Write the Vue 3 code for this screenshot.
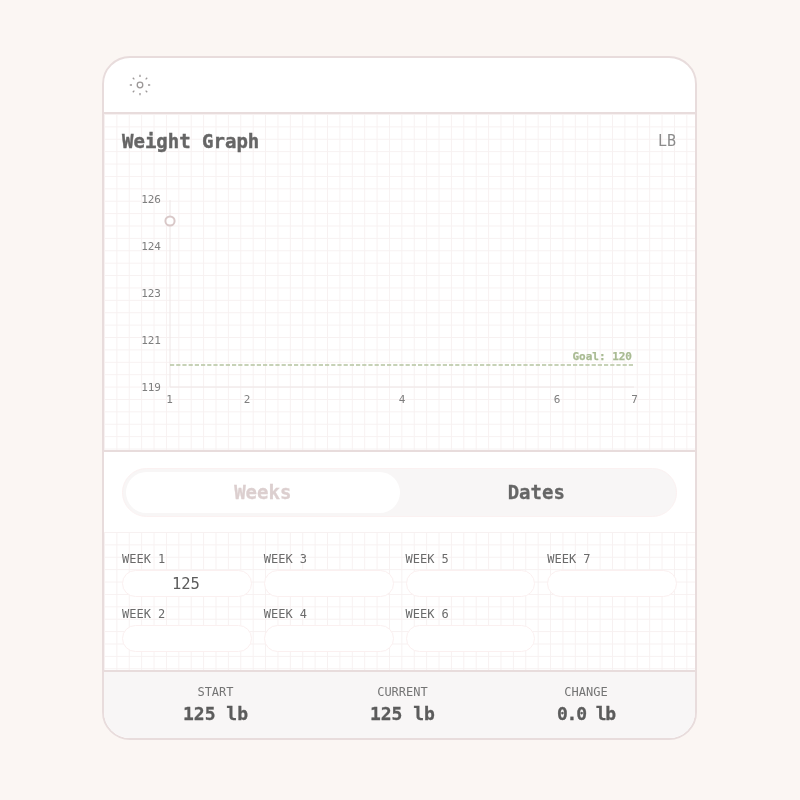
<script setup>
const weeks = [
  { label: 'WEEK 1', value: '125' }, { label: 'WEEK 2', value: '' },
  { label: 'WEEK 3', value: '' }, { label: 'WEEK 4', value: '' },
  { label: 'WEEK 5', value: '' }, { label: 'WEEK 6', value: '' },
  { label: 'WEEK 7', value: '' },
]
const yTicks = [
  { t: '126', y: 12 }, { t: '124', y: 59 }, { t: '123', y: 106 }, { t: '121', y: 153 }, { t: '119', y: 200 },
]
const xTicks = [
  { t: '1', x: 65.5 }, { t: '2', x: 143 }, { t: '4', x: 298 }, { t: '6', x: 453 }, { t: '7', x: 530.5 },
]
const rays = [0, 45, 90, 135, 180, 225, 270, 315]
const stats = [
  { label: 'START', value: '125 lb' },
  { label: 'CURRENT', value: '125 lb' },
  { label: 'CHANGE', value: '0.0 lb', tight: true },
]
</script>

<template>
  <div class="page">
    <div class="card">
      <header class="top">
        <svg class="sun" width="24" height="24" viewBox="0 0 24 24">
          <circle cx="12" cy="12" r="2.8" />
          <line v-for="r in rays" :key="r" x1="12" y1="1.8" x2="12" y2="4" :transform="`rotate(${r} 12 12)`" />
        </svg>
      </header>
      <section class="graph grid-bg">
        <div class="graph-head">
          <h2>Weight Graph</h2>
          <span class="unit">LB</span>
        </div>
        <svg class="chart" width="590" height="225" viewBox="0 0 590 225">
          <line class="axis" x1="66" y1="13" x2="66" y2="200" />
          <line class="axis" x1="66" y1="200" x2="530" y2="200" />
          <line class="goal" x1="66" y1="178" x2="529" y2="178" />
          <text class="goal-text" x="528" y="173" text-anchor="end">Goal: 120</text>
          <text v-for="y in yTicks" :key="y.t" class="tick" x="57" :y="y.y + 4" text-anchor="end">{{ y.t }}</text>
          <text v-for="x in xTicks" :key="x.t" class="tick" :x="x.x" y="216" text-anchor="middle">{{ x.t }}</text>
          <circle class="point" cx="66" cy="34" r="4.6" />
        </svg>
      </section>
      <section class="toggle-wrap">
        <div class="toggle">
          <div class="tab active">Weeks</div>
          <div class="tab">Dates</div>
        </div>
      </section>
      <section class="weeks grid-bg">
        <div v-for="w in weeks" :key="w.label" class="week">
          <span class="week-label">{{ w.label }}</span>
          <div class="week-input">{{ w.value }}</div>
        </div>
      </section>
      <footer class="stats">
        <div v-for="s in stats" :key="s.label" class="stat">
          <span class="stat-label">{{ s.label }}</span>
          <strong class="stat-value" :class="{ tight: s.tight }">{{ s.value }}</strong>
        </div>
      </footer>
    </div>
  </div>
</template>

<style>
html, body { margin: 0; background: #fbf6f3; }
</style>

<style scoped>
.page {
  width: 800px;
  height: 800px;
  display: flex;
  align-items: flex-start;
  justify-content: center;
  padding: 56px 1px 0 0;
  box-sizing: border-box;
  font-family: "DejaVu Sans Mono", "Liberation Mono", monospace;
  color: #5c5c5c;
  will-change: transform;
}
.card {
  width: 595px;
  height: 684px;
  box-sizing: border-box;
  background: #fff;
  border: 2px solid #e8dcdc;
  border-radius: 28px;
  overflow: hidden;
  display: flex;
  flex-direction: column;
}
.top {
  height: 56px;
  flex: none;
  box-sizing: border-box;
  border-bottom: 2px solid #e8dcdc;
  display: flex;
  align-items: center;
  padding-left: 24px;
}
.sun { stroke: #9c9898; fill: none; stroke-width: 1.3; }
.grid-bg {
  background-color: #fff;
  background-image:
    linear-gradient(#f7f1f1 1px, transparent 1px),
    linear-gradient(90deg, #f7f1f1 1px, transparent 1px);
  background-size: 12.4px 12.4px;
}
.graph {
  height: 338px;
  flex: none;
  box-sizing: border-box;
  border-bottom: 2px solid #e8dcdc;
  padding-top: 15px;
  display: flex;
  flex-direction: column;
}
.graph-head {
  display: flex;
  justify-content: space-between;
  align-items: center;
  padding: 0 19px 0 18px;
  height: 24px;
}
.graph-head h2 {
  margin: 0;
  font-size: 19px;
  font-weight: 700;
  color: #666;
  -webkit-text-stroke: 0.4px #666;
}
.unit { font-size: 15px; color: #8b8b8b; }
.chart { display: block; margin-top: 34px; }
.axis { stroke: #eee6e6; stroke-width: 1; }
.goal { stroke: #b5c4a0; stroke-width: 1.5; stroke-dasharray: 4.2 2; }
.goal-text { font-size: 11px; font-weight: 700; fill: #a9bb93; stroke: #a9bb93; stroke-width: 0.25px; }
.tick { font-size: 11px; fill: #7e7e7e; }
.point { fill: #fff; stroke: #d9c8c8; stroke-width: 2; }
.toggle-wrap {
  height: 80px;
  flex: none;
  box-sizing: border-box;
  padding: 16px 18px 15px;
}
.toggle {
  height: 49px;
  box-sizing: border-box;
  background: #f8f6f6;
  border: 1.5px solid #fbf1f1;
  border-radius: 25px;
  padding: 3px;
  display: flex;
}
.tab {
  flex: 1;
  display: flex;
  align-items: center;
  justify-content: center;
  border-radius: 21px;
  padding-bottom: 2px;
  box-sizing: border-box;
  font-size: 19px;
  font-weight: 700;
  color: #666;
  -webkit-text-stroke: 0.3px currentColor;
}
.tab.active { background: #fff; color: #dccfcf; }
.weeks {
  height: 140px;
  flex: none;
  box-sizing: border-box;
  border-bottom: 2px solid #e8dcdc;
  padding: 19px 18px 0;
  display: grid;
  grid-template-columns: repeat(4, 1fr);
  grid-template-rows: 49px 49px;
  grid-auto-flow: column;
  column-gap: 12px;
  row-gap: 6px;
  align-content: start;
}
.week { display: flex; flex-direction: column; gap: 1.5px; }
.week-label { font-size: 12px; line-height: 17px; color: #6a6a6a; }
.week-input {
  height: 27px;
  box-sizing: border-box;
  background: #fff;
  border: 1.5px solid #fbf0f0;
  border-radius: 14px;
  padding-right: 2px;
  font-size: 15.5px;
  line-height: 26px;
  text-align: center;
  color: #5c5c5c;
}
.stats {
  flex: 1;
  background: #f8f6f6;
  display: flex;
  justify-content: space-around;
  align-items: center;
  padding: 0 19px 2px 18px;
}
.stat { display: flex; flex-direction: column; align-items: center; gap: 3px; }
.stat-label { font-size: 12px; line-height: 16px; color: #747474; }
.stat-value {
  font-size: 18px;
  line-height: 22px;
  font-weight: 700;
  color: #5c5c5c;
  -webkit-text-stroke: 0.3px #5c5c5c;
}
.stat-value.tight { letter-spacing: -1.15px; }
</style>
